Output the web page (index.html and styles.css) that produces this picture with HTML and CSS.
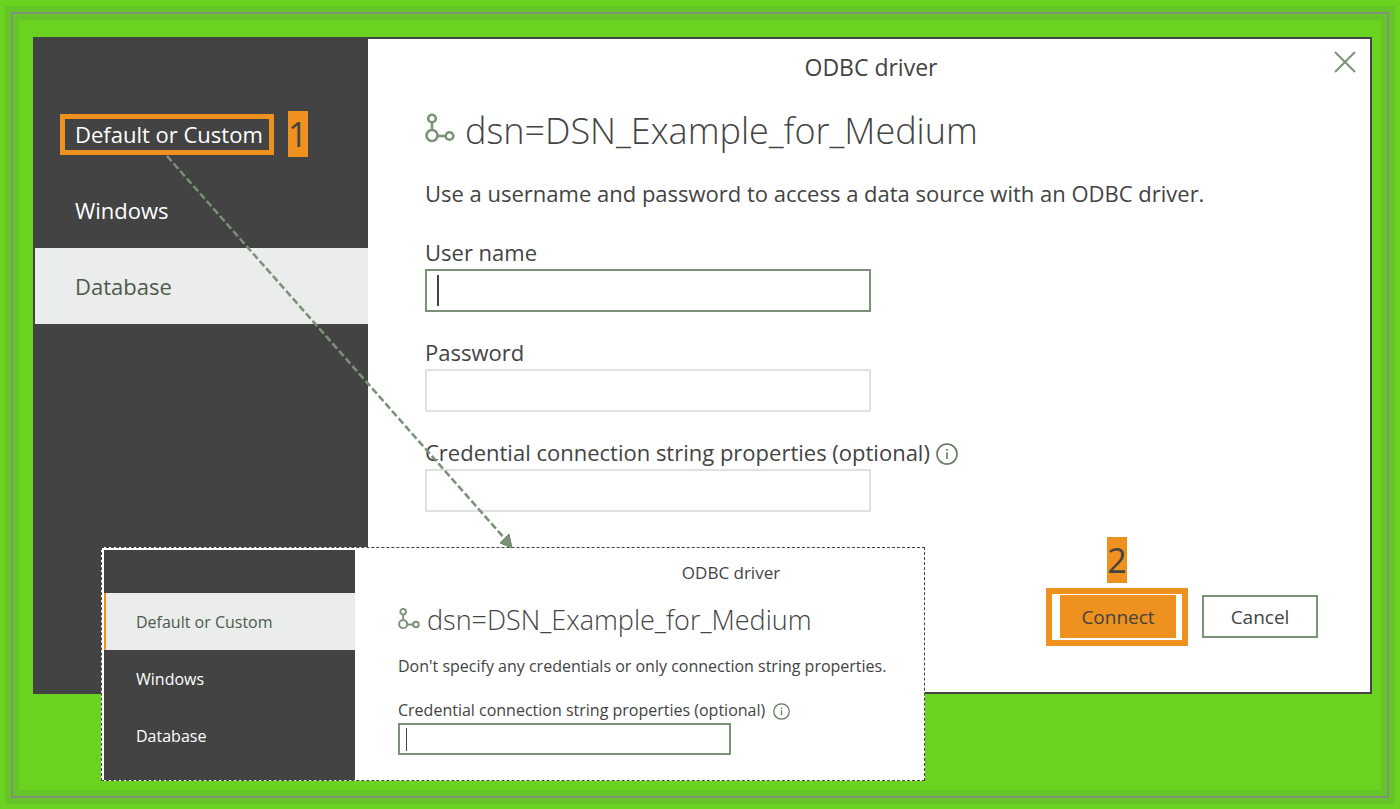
FILE: index.html
```html
<!DOCTYPE html>
<html lang="en">
<head>
<meta charset="utf-8">
<title>ODBC driver</title>
<link rel="stylesheet" href="styles.css">
</head>
<body>
<svg class="symbols" aria-hidden="true">
  <symbol id="nodes" viewBox="0 0 30 31">
    <g fill="none" stroke="currentColor" stroke-width="2.600">
      <circle cx="7" cy="5.500" r="3.800"/>
      <circle cx="7" cy="22.500" r="5.500"/>
      <circle cx="24.500" cy="23" r="3.800"/>
      <path d="M7 9v8M12 23h9"/>
    </g>
  </symbol>
  <symbol id="info" viewBox="0 0 22 22">
    <circle cx="11" cy="11" r="10" fill="none" stroke="currentColor" stroke-width="1.6"/>
    <path d="M11 9.500v6.500M11 6v1.800" fill="none" stroke="currentColor" stroke-width="1.600"/>
  </symbol>
</svg>
<div class="frame">
  <section class="dialog">
    <nav class="sidebar">
      <button class="tab" type="button"><span class="marked">Default or Custom</span><span class="step">1</span></button>
      <button class="tab" type="button">Windows</button>
      <button class="tab selected" type="button">Database</button>
    </nav>
    <form class="main">
      <header class="titlebar">
        <span class="title">ODBC driver</span>
        <button class="close" type="button" aria-label="Close">
          <svg width="22" height="22" viewBox="0 0 22 22"><path d="M1 1l20 20M21 1L1 21" fill="none" stroke="currentColor" stroke-width="2"/></svg>
        </button>
      </header>
      <h1 class="source"><svg class="nodes"><use href="#nodes"/></svg>dsn=DSN_Example_for_Medium</h1>
      <p class="description">Use a username and password to access a data source with an ODBC driver.</p>
      <div class="field">
        <label for="user">User name</label>
        <span class="entry"><input class="active" id="user" type="text"><i class="caret"></i></span>
      </div>
      <div class="field">
        <label for="password">Password</label>
        <span class="entry"><input id="password" type="password"></span>
      </div>
      <div class="field">
        <label for="properties">Credential connection string properties (optional) <svg class="info"><use href="#info"/></svg></label>
        <span class="entry"><input id="properties" type="text"></span>
      </div>
      <footer class="actions">
        <div class="callout">
          <span class="step">2</span>
          <div class="ring"><button class="button connect" type="button">Connect</button></div>
        </div>
        <button class="button cancel" type="button">Cancel</button>
      </footer>
    </form>
  </section>

  <section class="inset">
    <nav class="sidebar">
      <button class="tab selected" type="button">Default or Custom</button>
      <button class="tab" type="button">Windows</button>
      <button class="tab" type="button">Database</button>
    </nav>
    <form class="main">
      <header class="titlebar"><span class="title">ODBC driver</span></header>
      <h2 class="source"><svg class="nodes"><use href="#nodes"/></svg>dsn=DSN_Example_for_Medium</h2>
      <p class="description">Don't specify any credentials or only connection string properties.</p>
      <div class="field">
        <label for="inset-properties">Credential connection string properties (optional) <svg class="info"><use href="#info"/></svg></label>
        <span class="entry"><input class="active" id="inset-properties" type="text"><i class="caret"></i></span>
      </div>
    </form>
  </section>

  <svg class="arrow" viewBox="0 0 348 394" aria-hidden="true">
    <path d="M1 1L340 385" fill="none" stroke="#7b9278" stroke-width="2.500" stroke-dasharray="7 3"/>
    <path d="M346 393L334 388L343 379Z" fill="#7b9278" stroke="#6c8468"/>
  </svg>
</div>
</body>
</html>
```
FILE: styles.css
```css
* { box-sizing: border-box; }

body {
  margin: 0;
  min-height: 100vh;
  padding: 12px 11px 11px;
  display: flex;
  flex-direction: column;
  background: #69d320;
  color: #434343;
  font-family: "Open Sans", "Noto Sans", sans-serif;
  font-size: 22px;
}

button, input { font: inherit; color: inherit; }
.symbols { position: absolute; width: 0; height: 0; }

.frame {
  position: relative;
  flex: 1;
  padding: 23px 15px 80px 20px;
  border: 2px solid #84917b;
  box-shadow: 0 0 0 6px #65c528, inset 0 0 0 6px #65c528;
}

.dialog {
  display: flex;
  border: 2px solid #434343;
  background: #fff;
}

.sidebar {
  flex: 0 0 333px;
  padding-top: 57px;
  background: #434343;
}

.tab {
  display: flex;
  align-items: center;
  gap: 14px;
  width: 100%;
  height: 76px;
  padding: 0 0 0 40px;
  border: 0;
  background: none;
  color: #fff;
  text-align: left;
  white-space: nowrap;
}

.tab.selected { background: #ebecec; color: #4c5b4b; }

.marked {
  margin-left: -15px;
  padding: 0 6px 0 10px;
  border: 5px solid #ef911f;
  line-height: 31px;
}

.step {
  width: 20px;
  background: #ef911f;
  color: #434343;
  font-size: 34px;
  line-height: 46px;
  text-align: center;
}

.main {
  flex: 1;
  padding: 12px 0 46px 57px;
}

.titlebar {
  display: grid;
  grid-template-columns: 1fr auto 1fr;
  align-items: start;
  margin-left: -57px;
  padding: 0 14px 0 18px;
  font-size: 23px;
  line-height: 32px;
}

.title { grid-column: 2; }

.close {
  justify-self: end;
  display: flex;
  height: 22px;
  padding: 0;
  border: 0;
  background: none;
  color: #7b9278;
}

.source {
  display: flex;
  align-items: center;
  gap: 10px;
  margin: 20px 0 18px;
  font-size: 36px;
  font-weight: 300;
  line-height: 56px;
}

.nodes { width: 30px; height: 31px; margin-bottom: 6px; color: #7b9278; }

.description {
  margin: 0 0 28px;
  line-height: 32px;
}

.field { margin-bottom: 25px; }

.field label {
  display: flex;
  align-items: center;
  gap: 6px;
  margin-bottom: 2px;
  line-height: 30px;
}

.info { width: 22px; height: 22px; margin-top: 3px; color: #5f7a5c; }

.entry {
  position: relative;
  display: block;
  width: 446px;
}

.entry input {
  display: block;
  width: 100%;
  height: 43px;
  padding: 0 12px;
  border: 2px solid #dfe2e0;
  outline: 0;
  background: #fff;
}

.entry input.active { border-color: #7b9278; }

.caret {
  position: absolute;
  top: 6px;
  left: 12px;
  width: 2px;
  height: 31px;
  background: #434343;
}

.actions {
  display: flex;
  justify-content: flex-end;
  align-items: flex-end;
  gap: 14px;
  padding-right: 52px;
}

.callout {
  display: flex;
  flex-direction: column;
  align-items: center;
  gap: 5px;
}

.ring {
  padding: 1px 6px 2px 8px;
  border: 6px solid #ef911f;
}

.button {
  display: block;
  width: 116px;
  height: 43px;
  padding: 0;
  font-size: 19px;
}

.connect { border: 0; background: #ef911f; }

.cancel {
  margin-bottom: 8px;
  border: 2px solid #7b9278;
  background: #fff;
}

.inset {
  position: absolute;
  top: 533px;
  left: 88px;
  display: flex;
  width: 824px;
  border: 1px dashed #434343;
  background: #fff;
  font-size: 16px;
}

.inset .sidebar {
  flex: 0 0 251px;
  margin: 2px 0 0 2px;
  padding-top: 43px;
}

.inset .tab { height: 57px; padding-left: 32px; }
.inset .tab.selected { padding-left: 30px; border-left: 2px solid #ef911f; }
.inset .main { padding: 13px 0 25px 43px; }
.inset .titlebar { margin: 0; padding: 0 0 0 140px; font-size: 17px; line-height: 24px; }
.inset .source { gap: 7px; margin: 15px 0 14px; font-size: 27px; line-height: 40px; }
.inset .nodes { width: 22px; height: 24px; margin-bottom: 3px; }
.inset .description { margin-bottom: 20px; line-height: 24px; }
.inset .field { margin: 0; }
.inset .field label { gap: 8px; margin: 0 0 1px; line-height: 24px; }
.inset .info { width: 17px; height: 17px; }
.inset .entry { width: 333px; }
.inset .entry input { height: 32px; padding: 0 8px; }
.inset .caret { top: 5px; left: 8px; width: 1px; height: 23px; }

.arrow {
  position: absolute;
  top: 141px;
  left: 153px;
  width: 348px;
  height: 394px;
  pointer-events: none;
}
```
